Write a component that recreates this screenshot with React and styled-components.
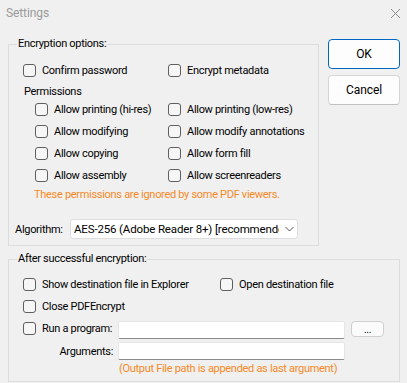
import React from "react";
import styled, { createGlobalStyle } from "styled-components";

const Global = createGlobalStyle`
  html, body { margin: 0; padding: 0; background: #f0f0f0; }
  body { font-family: Roboto, "Liberation Sans", Arial, sans-serif; font-size: 11px; letter-spacing: -0.3px; color: #000; }
`;

const Window = styled.div`
  width: 407px;
  height: 383px;
  background: #f0f0f0;
  overflow: hidden;
`;

const TitleBar = styled.div`
  height: 30px;
  display: flex;
  align-items: flex-start;
  justify-content: space-between;
  padding: 6px 6px 0 6px;
  box-sizing: border-box;
  color: #9a9a9a;
  font-size: 12px;
  letter-spacing: -0.1px;
`;

const CloseIcon = styled.svg`
  width: 11px;
  height: 11px;
  margin-top: 2px;
`;

const Content = styled.div`
  padding: 9px 0 0 8px;
`;

const TopRow = styled.div`
  display: flex;
  align-items: flex-start;
`;

const Group = styled.div`
  position: relative;
  border: 1px solid #dcdcdc;
  box-sizing: border-box;
  width: ${(p) => p.$w}px;
  height: ${(p) => p.$h}px;
  margin-top: ${(p) => p.$mt || 0}px;
  padding: ${(p) => p.$pt}px 0 0 14px;
`;

const Legend = styled.span`
  position: absolute;
  top: -9px;
  left: 8px;
  padding: 0 1px;
  background: #f0f0f0;
  line-height: 16px;
`;

const Row = styled.div`
  display: grid;
  grid-template-columns: ${(p) => p.$first}px auto;
  height: ${(p) => p.$h || 22}px;
  align-items: center;
  margin-left: ${(p) => p.$indent || 0}px;
`;

const Check = styled.label`
  display: flex;
  align-items: center;
  gap: 6px;
  white-space: nowrap;
  flex: none;
`;

const Box = styled.span`
  width: 13px;
  height: 13px;
  box-sizing: border-box;
  border: 1px solid #5f5f5f;
  border-radius: 3px;
  background: #f6f6f6;
  flex: none;
`;

const SubLabel = styled.div`
  height: 17px;
  padding-top: 4px;
  box-sizing: border-box;
  line-height: 14px;
  margin-left: 1px;
`;

const Note = styled.div`
  color: #f7891f;
  height: 18px;
  line-height: 18px;
  white-space: nowrap;
  margin-left: ${(p) => p.$indent}px;
`;

const AlgoRow = styled.div`
  display: flex;
  align-items: center;
  height: 20px;
  margin-top: 15px;
  margin-left: -8px;
`;

const AlgoLabel = styled.span`
  width: 55px;
`;

const SelectBox = styled.div`
  width: 228px;
  height: 20px;
  box-sizing: border-box;
  background: #fff;
  border: 1px solid #dedede;
  border-radius: 3px;
  display: flex;
  align-items: center;
  padding-left: 3px;
  overflow: hidden;
`;

const SelectText = styled.span`
  width: 205px;
  overflow: hidden;
  white-space: nowrap;
  font-size: 11.5px;
  letter-spacing: -0.15px;
`;

const Chevron = styled.svg`
  width: 9px;
  height: 6px;
  margin-left: 6px;
`;

const Buttons = styled.div`
  display: flex;
  flex-direction: column;
  gap: 6px;
  margin-left: 9px;
`;

const Button = styled.button`
  width: 72px;
  height: 30px;
  box-sizing: border-box;
  font-family: inherit;
  font-size: 12px;
  letter-spacing: -0.1px;
  color: #000;
  background: #fdfdfd;
  border: 1px solid ${(p) => (p.$primary ? "#0067c0" : "#d6d6d6")};
  border-bottom-color: ${(p) => (p.$primary ? "#0067c0" : "#c2c2c2")};
  border-radius: 4px;
  padding: 0;
`;

const RunRow = styled.div`
  display: flex;
  height: 22px;
  align-items: center;
`;

const RunLabel = styled(Check)`
  width: 95px;
`;

const TextInput = styled.div`
  width: 227px;
  height: 18px;
  box-sizing: border-box;
  background: #fff;
  border: 1px solid #e6e6e6;
  border-bottom: 1px solid #8a8a8a;
  border-radius: 2px;
  align-self: flex-end;
`;

const SmallButton = styled.div`
  width: 33px;
  height: 16px;
  box-sizing: border-box;
  margin-left: 6px;
  align-self: flex-end;
  margin-bottom: 2px;
  background: #fbfbfb;
  border: 1px solid #cfcfcf;
  border-radius: 4px;
  display: flex;
  justify-content: center;
  align-items: flex-end;
  font-size: 10px;
  line-height: 12px;
`;

const ArgRow = styled.div`
  display: flex;
  height: 18px;
  align-items: center;
  margin-top: 3px;
`;

const ArgLabel = styled.span`
  width: 90px;
  text-align: right;
  margin-right: 5px;
`;

function CheckItem({ children }) {
  return (
    <Check>
      <Box />
      {children}
    </Check>
  );
}

export default function App() {
  return (
    <Window>
      <Global />
      <TitleBar>
        <span>Settings</span>
        <CloseIcon viewBox="0 0 11 11">
          <path d="M1 1 L10 10 M10 1 L1 10" stroke="#8c8c8c" strokeWidth="1" fill="none" />
        </CloseIcon>
      </TitleBar>
      <Content>
        <TopRow>
          <Group $w={311} $h={202} $mt={5} $pt={14}>
            <Legend>Encryption options:</Legend>
            <Row $first={145}>
              <CheckItem>Confirm password</CheckItem>
              <CheckItem>Encrypt metadata</CheckItem>
            </Row>
            <SubLabel>Permissions</SubLabel>
            <Row $first={133} $indent={12}>
              <CheckItem>Allow printing (hi-res)</CheckItem>
              <CheckItem>Allow printing (low-res)</CheckItem>
            </Row>
            <Row $first={133} $indent={12}>
              <CheckItem>Allow modifying</CheckItem>
              <CheckItem>Allow modify annotations</CheckItem>
            </Row>
            <Row $first={133} $indent={12}>
              <CheckItem>Allow copying</CheckItem>
              <CheckItem>Allow form fill</CheckItem>
            </Row>
            <Row $first={133} $indent={12}>
              <CheckItem>Allow assembly</CheckItem>
              <CheckItem>Allow screenreaders</CheckItem>
            </Row>
            <Note $indent={11}>These permissions are ignored by some PDF viewers.</Note>
            <AlgoRow>
              <AlgoLabel>Algorithm:</AlgoLabel>
              <SelectBox>
                <SelectText>AES-256 (Adobe Reader 8+) [recommended]</SelectText>
                <Chevron viewBox="0 0 9 6">
                  <path d="M0.5 1 L4.5 5 L8.5 1" stroke="#555" strokeWidth="1" fill="none" />
                </Chevron>
              </SelectBox>
            </AlgoRow>
          </Group>
          <Buttons>
            <Button $primary>OK</Button>
            <Button>Cancel</Button>
          </Buttons>
        </TopRow>
        <Group $w={392} $h={123} $mt={13} $pt={13}>
          <Legend>After successful encryption:</Legend>
          <Row $first={197}>
            <CheckItem>Show destination file in Explorer</CheckItem>
            <CheckItem>Open destination file</CheckItem>
          </Row>
          <Row $first={197}>
            <CheckItem>Close PDFEncrypt</CheckItem>
          </Row>
          <RunRow>
            <RunLabel>
              <Box />
              Run a program:
            </RunLabel>
            <TextInput />
            <SmallButton>...</SmallButton>
          </RunRow>
          <ArgRow>
            <ArgLabel>Arguments:</ArgLabel>
            <TextInput />
          </ArgRow>
          <Note $indent={96}>(Output File path is appended as last argument)</Note>
        </Group>
      </Content>
    </Window>
  );
}
